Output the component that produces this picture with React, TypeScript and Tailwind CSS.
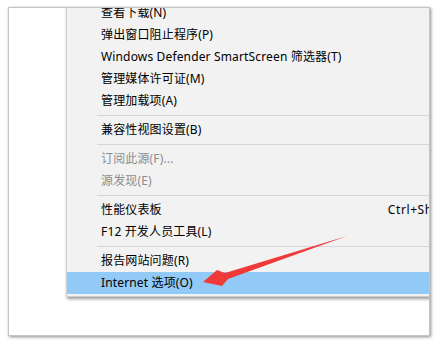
import React from "react";

type Item =
  | { type: "item"; label: string; shortcut?: string; disabled?: boolean; active?: boolean }
  | { type: "sep" };

const items: Item[] = [
  { type: "item", label: "查看下载(N)", shortcut: "Ctrl+J" },
  { type: "item", label: "弹出窗口阻止程序(P)" },
  { type: "item", label: "Windows Defender SmartScreen 筛选器(T)" },
  { type: "item", label: "管理媒体许可证(M)" },
  { type: "item", label: "管理加载项(A)" },
  { type: "sep" },
  { type: "item", label: "兼容性视图设置(B)" },
  { type: "sep" },
  { type: "item", label: "订阅此源(F)...", disabled: true },
  { type: "item", label: "源发现(E)", disabled: true },
  { type: "sep" },
  { type: "item", label: "性能仪表板", shortcut: "Ctrl+Shift+U" },
  { type: "item", label: "F12 开发人员工具(L)", shortcut: "F12" },
  { type: "sep" },
  { type: "item", label: "报告网站问题(R)" },
  { type: "item", label: "Internet 选项(O)", active: true },
];

export default function App() {
  return (
    <div
      className="relative w-[439px] h-[345px] bg-white overflow-hidden"
      style={{ fontFamily: '"Segoe UI", "Noto Sans", "Noto Sans CJK SC", sans-serif' }}
    >
      <div className="ml-[8px] mt-[7px] w-[422px] h-[329px] bg-white border border-[#c4c4c4] shadow-[1px_1px_3px_rgba(0,0,0,0.45)] overflow-hidden flex items-start">
        <div className="w-[57px] shrink-0" />
        <div className="shrink-0 w-[440px] -mt-[6px] bg-[#f2f2f2] border-l border-b border-[#cfcfcf] shadow-[1px_2px_3px_rgba(0,0,0,0.4)] flex flex-col pb-[2px]">
          {items.map((it, i) =>
            it.type === "sep" ? (
              <div key={i} className="h-[7px] shrink-0 flex items-center pl-[30px]">
                <div className="h-px w-full bg-[#d7d7d7]" />
              </div>
            ) : (
              <div
                key={i}
                className={
                  "h-[22px] shrink-0 flex items-center justify-between pl-[34px] pr-[43px] text-[12px] leading-none " +
                  (it.active ? "bg-[#91c9f7] " : "") +
                  (it.disabled ? "text-[#8d8d8d]" : "text-black")
                }
              >
                <span className="whitespace-nowrap tracking-[0.15px]">{it.label}</span>
                {it.shortcut && (
                  <span className="whitespace-nowrap tracking-[0.6px]">{it.shortcut}</span>
                )}
              </div>
            )
          )}
        </div>
      </div>
      <svg
        className="absolute left-0 top-0 pointer-events-none"
        width="439"
        height="345"
        viewBox="0 0 439 345"
      >
        <polygon
          points="347,236 228,279 222,286 203,282 217,270 225,273"
          fill="#f03a3a"
        />
      </svg>
    </div>
  );
}
